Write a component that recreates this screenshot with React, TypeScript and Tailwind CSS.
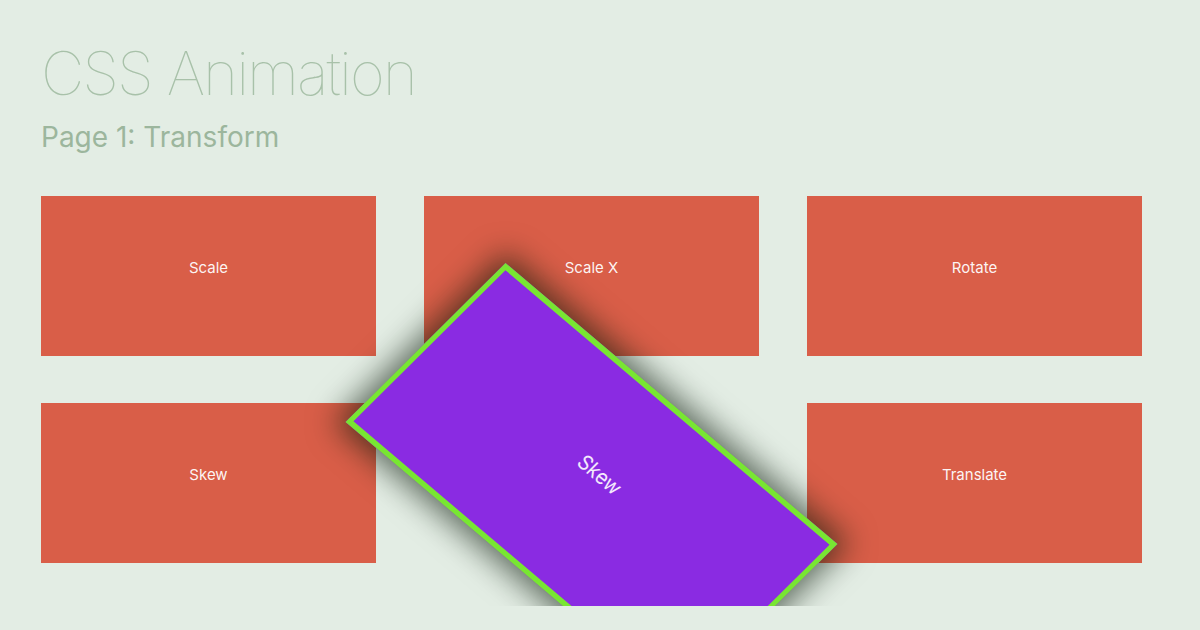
const tiles = [
  { label: "Scale" },
  { label: "Scale X" },
  { label: "Rotate" },
  { label: "Skew" },
  { label: "Skew", active: true },
  { label: "Translate" },
];

export default function App() {
  return (
    <div className="h-[630px] w-[1200px] bg-[#e3ede4] font-['Inter',sans-serif]">
      <div className="h-[606px] overflow-hidden px-[41px] pt-[43px]">
        <h1 className="text-[60px] font-thin leading-none tracking-[-2px] text-[#a8c1a9]">
          CSS Animation
        </h1>
        <h2 className="mt-[20px] text-[28px] font-normal leading-none text-[#9cb69d]">
          Page 1: Transform
        </h2>
        <div className="mt-[45px] grid grid-cols-[repeat(3,335px)] grid-rows-[repeat(2,160px)] gap-x-12 gap-y-[47px]">
          {tiles.map((t, i) =>
            t.active ? (
              <div
                key={i}
                className="relative z-10 flex items-center justify-center border-4 border-[#78e632] bg-[#8a2be2] pb-4 text-[15px] text-white/90 shadow-[0_0_22px_6px_rgba(10,25,10,0.6)] [transform:matrix(0.991,0.839,-1,0.994,0,0)]"
              >
                {t.label}
              </div>
            ) : (
              <div
                key={i}
                className="flex items-center justify-center bg-[#d95e48] pb-4 text-[15px] text-white/95"
              >
                {t.label}
              </div>
            ),
          )}
        </div>
      </div>
    </div>
  );
}
